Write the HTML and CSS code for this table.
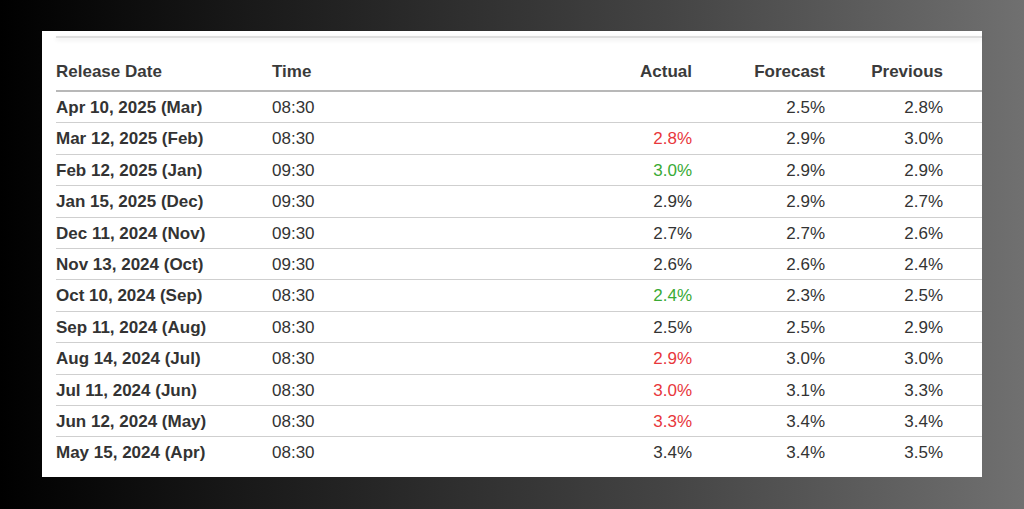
FILE: index.html
```html
<!DOCTYPE html>
<html lang="en">
<head>
<meta charset="utf-8">
<title>Release table</title>
<link rel="stylesheet" href="styles.css">
</head>
<body>
<div class="card">
  <div class="topbar"></div>
  <table class="data">
    <colgroup>
      <col class="c-date"><col class="c-time"><col class="c-actual"><col class="c-forecast"><col class="c-prev">
    </colgroup>
    <thead>
      <tr><th class="l">Release Date</th><th class="l">Time</th><th class="r">Actual</th><th class="r">Forecast</th><th class="r last">Previous</th></tr>
    </thead>
    <tbody>
      <tr><td class="date">Apr 10, 2025 (Mar)</td><td>08:30</td><td class="r"></td><td class="r">2.5%</td><td class="r last">2.8%</td></tr>
      <tr><td class="date">Mar 12, 2025 (Feb)</td><td>08:30</td><td class="r neg">2.8%</td><td class="r">2.9%</td><td class="r last">3.0%</td></tr>
      <tr><td class="date">Feb 12, 2025 (Jan)</td><td>09:30</td><td class="r pos">3.0%</td><td class="r">2.9%</td><td class="r last">2.9%</td></tr>
      <tr><td class="date">Jan 15, 2025 (Dec)</td><td>09:30</td><td class="r">2.9%</td><td class="r">2.9%</td><td class="r last">2.7%</td></tr>
      <tr><td class="date">Dec 11, 2024 (Nov)</td><td>09:30</td><td class="r">2.7%</td><td class="r">2.7%</td><td class="r last">2.6%</td></tr>
      <tr><td class="date">Nov 13, 2024 (Oct)</td><td>09:30</td><td class="r">2.6%</td><td class="r">2.6%</td><td class="r last">2.4%</td></tr>
      <tr><td class="date">Oct 10, 2024 (Sep)</td><td>08:30</td><td class="r pos">2.4%</td><td class="r">2.3%</td><td class="r last">2.5%</td></tr>
      <tr><td class="date">Sep 11, 2024 (Aug)</td><td>08:30</td><td class="r">2.5%</td><td class="r">2.5%</td><td class="r last">2.9%</td></tr>
      <tr><td class="date">Aug 14, 2024 (Jul)</td><td>08:30</td><td class="r neg">2.9%</td><td class="r">3.0%</td><td class="r last">3.0%</td></tr>
      <tr><td class="date">Jul 11, 2024 (Jun)</td><td>08:30</td><td class="r neg">3.0%</td><td class="r">3.1%</td><td class="r last">3.3%</td></tr>
      <tr><td class="date">Jun 12, 2024 (May)</td><td>08:30</td><td class="r neg">3.3%</td><td class="r">3.4%</td><td class="r last">3.4%</td></tr>
      <tr><td class="date">May 15, 2024 (Apr)</td><td>08:30</td><td class="r">3.4%</td><td class="r">3.4%</td><td class="r last">3.5%</td></tr>
    </tbody>
  </table>
</div>
</body>
</html>
```

FILE: styles.css
```css
html, body {
  margin: 0;
  padding: 0;
}
body {
  width: 1024px;
  height: 509px;
  overflow: hidden;
  background: linear-gradient(90deg, #000 0%, #1a1a1a 25%, #444 65%, #707070 100%);
  font-family: "Liberation Sans", Arial, sans-serif;
  color: #333;
  padding-top: 31px;
  box-sizing: border-box;
}
.card {
  margin-left: 42px;
  width: 940px;
  height: 446px;
  background: #fff;
  padding-left: 14px;
  padding-top: 5px;
  box-sizing: border-box;
}
.topbar {
  height: 2px;
  background: #dedede;
  box-shadow: 0 2px 4px rgba(0, 0, 0, 0.1);
}
.data {
  width: 926px;
  border-collapse: collapse;
  table-layout: fixed;
  font-size: 17px;
  line-height: 20px;
}
.c-date { width: 216px; }
.c-time { width: 300px; }
.c-actual { width: 120px; }
.c-forecast { width: 133px; }
.c-prev { width: 157px; }
th {
  font-weight: bold;
  padding: 24px 0 8px;
  border-bottom: 2px solid #b8b8b8;
  color: #3a3a3a;
}
td {
  padding: 6px 0 4.4px;
  border-bottom: 1px solid #cfcfcf;
  white-space: nowrap;
}
tbody tr:last-child td {
  border-bottom: none;
}
.l { text-align: left; }
.r { text-align: right; }
.last { padding-right: 39px; }
.date { font-weight: bold; }
.neg { color: #e8373c; }
.pos { color: #3aaa35; }
```
